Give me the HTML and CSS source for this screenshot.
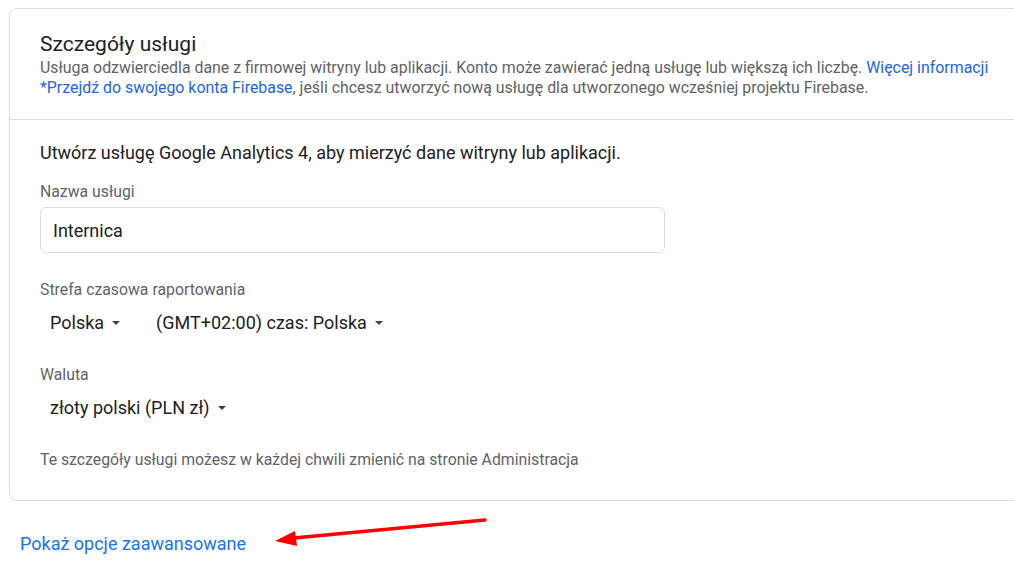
FILE: index.html
```html
<!DOCTYPE html>
<html lang="pl">
<head>
<meta charset="utf-8">
<title>Szczegóły usługi</title>
<link rel="stylesheet" href="styles.css">
</head>
<body>
<div class="page">
  <section class="card">
    <header class="card-head">
      <h1 class="title">Szczegóły usługi</h1>
      <p class="desc">Usługa odzwierciedla dane z firmowej witryny lub aplikacji. Konto może zawierać jedną usługę lub większą ich liczbę. <a class="link" href="#">Więcej informacji</a></p>
      <p class="desc"><a class="link" href="#">*Przejdź do swojego konta Firebase</a>, jeśli chcesz utworzyć nową usługę dla utworzonego wcześniej projektu Firebase.</p>
    </header>
    <div class="card-body">
      <p class="lead">Utwórz usługę Google Analytics 4, aby mierzyć dane witryny lub aplikacji.</p>
      <div class="label first">Nazwa usługi</div>
      <div class="input">Internica</div>
      <div class="label gap-tz">Strefa czasowa raportowania</div>
      <div class="selects">
        <div class="select">Polska<span class="caret"></span></div>
        <div class="select">(GMT+02:00) czas: Polska<span class="caret"></span></div>
      </div>
      <div class="label gap-cur">Waluta</div>
      <div class="selects">
        <div class="select">złoty polski (PLN zł)<span class="caret"></span></div>
      </div>
      <p class="note">Te szczegóły usługi możesz w każdej chwili zmienić na stronie Administracja</p>
    </div>
  </section>
  <a class="advanced" href="#">Pokaż opcje zaawansowane</a>
  <svg class="arrow" width="1014" height="571" viewBox="0 0 1014 571" aria-hidden="true">
    <line x1="485" y1="520" x2="294" y2="538" stroke="#ff0000" stroke-width="3.5" stroke-linecap="round"/>
    <polygon points="275,541 295,531 297,546" fill="#ff0000"/>
  </svg>
</div>
</body>
</html>
```

FILE: styles.css
```css
html, body {
  margin: 0;
  padding: 0;
  background: #ffffff;
  overflow: hidden;
}

body {
  font-family: Roboto, "Liberation Sans", Arial, sans-serif;
  color: #202124;
}

.page {
  position: relative;
  width: 1014px;
  height: 571px;
  padding-top: 8px;
  padding-left: 9px;
  box-sizing: border-box;
}

.card {
  width: 1040px;
  border: 1px solid #dadce0;
  border-radius: 8px;
  box-sizing: border-box;
}

.card-head {
  padding: 21px 30px 21px 30px;
  border-bottom: 1px solid #dadce0;
}

.title {
  margin: 0;
  font-size: 21px;
  font-weight: 400;
  line-height: 28px;
  color: #202124;
}

.desc {
  margin: 0;
  font-size: 15.9px;
  line-height: 20px;
  color: #5f6368;
  white-space: nowrap;
}

.link {
  color: #2563e0;
  text-decoration: none;
}

.card-body {
  padding: 21px 30px 30px 30px;
}

.lead {
  margin: 0;
  font-size: 18px;
  line-height: 24px;
  color: #202124;
  white-space: nowrap;
}

.label {
  font-size: 15.8px;
  line-height: 20px;
  color: #5f6368;
  white-space: nowrap;
}

.label.first {
  margin-top: 17px;
}

.label.gap-tz {
  margin-top: 27px;
}

.label.gap-cur {
  margin-top: 30px;
}

.input {
  margin-top: 5px;
  width: 625px;
  height: 46px;
  box-sizing: border-box;
  border: 1px solid #dadce0;
  border-radius: 6px;
  padding: 0 12px;
  display: flex;
  align-items: center;
  font-size: 18px;
  color: #202124;
}

.selects {
  margin-top: 11px;
  display: flex;
  gap: 16px;
}

.select {
  display: flex;
  align-items: center;
  padding: 0 10px;
  font-size: 18px;
  line-height: 24px;
  color: #202124;
  white-space: nowrap;
}

.caret {
  margin-left: 8px;
  width: 0;
  height: 0;
  border-left: 4.5px solid transparent;
  border-right: 4.5px solid transparent;
  border-top: 4.5px solid #3c4043;
}

.note {
  margin: 30px 0 0 0;
  font-size: 15.8px;
  line-height: 20px;
  color: #5f6368;
  white-space: nowrap;
}

.advanced {
  display: inline-block;
  margin-top: 31px;
  margin-left: 11px;
  font-size: 18px;
  line-height: 24px;
  color: #1a73e8;
  text-decoration: none;
  white-space: nowrap;
}

.arrow {
  position: absolute;
  left: 0;
  top: 0;
  pointer-events: none;
}
```
